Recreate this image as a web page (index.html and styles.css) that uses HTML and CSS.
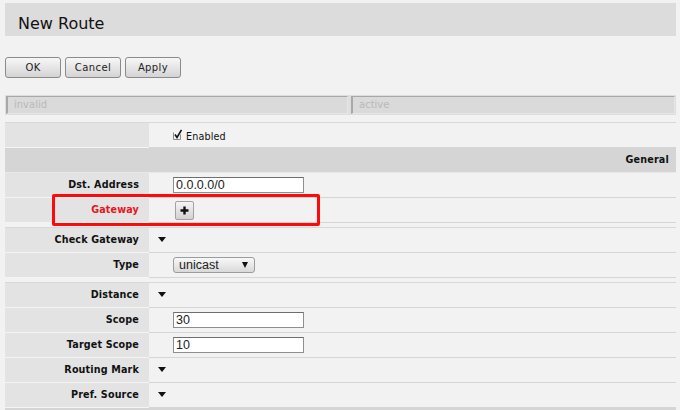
FILE: index.html
```html
<!DOCTYPE html>
<html>
<head>
<meta charset="utf-8">
<link rel="stylesheet" href="styles.css">
</head>
<body>
<div class="page">
  <div class="titlebar">New Route</div>
  <div class="buttons">
    <button class="btn btn-ok">OK</button>
    <button class="btn btn-cancel">Cancel</button>
    <button class="btn btn-apply">Apply</button>
  </div>
  <div class="status">
    <div class="field field-left">invalid</div>
    <div class="field field-right">active</div>
  </div>

  <div class="group">
    <div class="row">
      <div class="label"></div>
      <div class="value">
        <span class="check">
          <svg width="10" height="11" viewBox="0 0 10 11">
            <path d="M0.5 3.5 V10.5 H7.5 V5.5" fill="none" stroke="#8a8a8a" stroke-width="1"/>
            <path d="M2 5.5 L4 8.5 L8.5 0.8" fill="none" stroke="#111" stroke-width="1.6"/>
          </svg>
        </span>
        <span class="check-text">Enabled</span>
      </div>
    </div>
    <div class="section">General</div>
    <div class="row">
      <div class="label">Dst. Address</div>
      <div class="value"><input class="text" type="text" value="0.0.0.0/0"></div>
    </div>
    <div class="row row-gateway">
      <div class="label label-red">Gateway</div>
      <div class="value">
        <span class="plus">
          <svg width="9" height="9" viewBox="0 0 9 9"><path d="M4.5 0.5 V8.5 M0.5 4.5 H8.5" stroke="#111" stroke-width="2.4"/></svg>
        </span>
      </div>
      <div class="highlight"></div>
    </div>
  </div>

  <div class="group">
    <div class="row">
      <div class="label">Check Gateway</div>
      <div class="value value-tri"><span class="tri"></span></div>
    </div>
    <div class="row">
      <div class="label">Type</div>
      <div class="value">
        <span class="select">unicast<span class="sel-arrow"></span></span>
      </div>
    </div>
  </div>

  <div class="group">
    <div class="row">
      <div class="label">Distance</div>
      <div class="value value-tri"><span class="tri"></span></div>
    </div>
    <div class="row">
      <div class="label">Scope</div>
      <div class="value"><input class="text" type="text" value="30"></div>
    </div>
    <div class="row">
      <div class="label">Target Scope</div>
      <div class="value"><input class="text" type="text" value="10"></div>
    </div>
    <div class="row">
      <div class="label">Routing Mark</div>
      <div class="value value-tri"><span class="tri"></span></div>
    </div>
    <div class="row">
      <div class="label">Pref. Source</div>
      <div class="value value-tri"><span class="tri"></span></div>
    </div>
    <div class="section section-empty"></div>
  </div>
</div>
</body>
</html>
```

FILE: styles.css
```css
html, body {
  margin: 0;
  padding: 0;
  background: #f2f2f2;
  overflow: hidden;
}
body {
  font-family: "DejaVu Sans", Verdana, sans-serif;
  color: #111;
}
.page {
  padding: 3px 4px 0 5px;
}
.titlebar {
  height: 33px;
  background: #dcdcdc;
  box-sizing: border-box;
  padding-left: 13px;
  padding-top: 13px;
  font-size: 16px;
  line-height: 16px;
  color: #111;
}
.buttons {
  display: flex;
  gap: 4px;
  margin-top: 21px;
  height: 21px;
}
.btn {
  font-family: "DejaVu Sans", Verdana, sans-serif;
  font-size: 10px;
  color: #222;
  height: 21px;
  padding: 0;
  border: 1px solid #8a8a8a;
  border-radius: 3px;
  background: linear-gradient(#f7f7f7, #d4d4d4);
  letter-spacing: 0.4px;
}
.btn-ok { width: 56px; }
.btn-cancel { width: 56px; }
.btn-apply { width: 56px; }
.status {
  display: flex;
  gap: 3px;
  margin-top: 17px;
  height: 20px;
  background: #dedede;
  padding: 1px;
  box-sizing: border-box;
}
.field {
  box-sizing: border-box;
  height: 18px;
  background: #dadada;
  border-top: 1px solid #a8a8a8;
  border-left: 2px solid #a8a8a8;
  border-right: 1px solid #e6e6e6;
  border-bottom: 1px solid #e6e6e6;
  color: #b9b9b9;
  font-size: 10px;
  line-height: 16px;
  padding-left: 6px;
}
.field-left { width: 342px; }
.field-right { flex: 1; }

.group {
  margin-top: 7px;
  border-top: 1px solid #d8d8d8;
}
.group + .group {
  margin-top: 4px;
}
.row {
  display: flex;
  height: 25px;
  position: relative;
}
.label {
  width: 144px;
  box-sizing: border-box;
  background: #e3e3e3;
  border-bottom: 1px solid #f4f4f4;
  text-align: right;
  padding-right: 10px;
  font-size: 9.6px;
  font-weight: bold;
  line-height: 24px;
  color: #111;
  letter-spacing: 0.15px;
}
.label-red {
  color: #e8141e;
}
.value {
  flex: 1;
  box-sizing: border-box;
  border-bottom: 1px solid #d6d6d6;
  display: flex;
  align-items: center;
  padding-left: 24px;
}
.value-tri {
  padding-left: 9px;
}
.tri {
  width: 0;
  height: 0;
  border-left: 4px solid transparent;
  border-right: 4px solid transparent;
  border-top: 5px solid #111;
  margin-top: -1px;
}
.check {
  display: inline-flex;
  width: 10px;
  height: 11px;
  margin-top: -2px;
}
.check-text {
  font-size: 9.6px;
  margin-left: 3px;
  margin-top: 2px;
  letter-spacing: 0.15px;
}
.section {
  height: 25px;
  box-sizing: border-box;
  background: #d5d5d5;
  border-bottom: 1px solid #e8e8e8;
  text-align: right;
  padding-right: 7px;
  font-size: 9.6px;
  font-weight: bold;
  line-height: 24px;
  letter-spacing: 0.2px;
}
.section-empty {
  border-bottom: none;
}
.text {
  box-sizing: border-box;
  width: 131px;
  height: 16px;
  margin: 0;
  padding: 0 0 0 2px;
  border: 1px solid #8e8e8e;
  border-top-color: #6e6e6e;
  background: #fff;
  font-family: "Liberation Sans", Arial, sans-serif;
  font-size: 12.5px;
  color: #222;
  outline: none;
}
.plus {
  box-sizing: border-box;
  width: 19px;
  height: 19px;
  margin-left: 2px;
  border: 1px solid #a2a2a2;
  border-radius: 2px;
  background: linear-gradient(#f4f4f4, #d2d2d2);
  display: flex;
  align-items: center;
  justify-content: center;
}
.plus svg { display: block; }
.select {
  box-sizing: border-box;
  width: 82px;
  height: 16px;
  border: 1px solid #9c9c9c;
  border-radius: 3px;
  background: linear-gradient(#f8f8f8, #d9d9d9);
  font-family: "Liberation Sans", Arial, sans-serif;
  font-size: 12.5px;
  line-height: 14px;
  padding-left: 5px;
  color: #222;
  position: relative;
}
.sel-arrow {
  position: absolute;
  right: 6px;
  top: 4px;
  width: 0;
  height: 0;
  border-left: 3.5px solid transparent;
  border-right: 3.5px solid transparent;
  border-top: 6px solid #111;
}
.highlight {
  position: absolute;
  left: 47px;
  top: -4px;
  width: 268px;
  height: 32px;
  box-sizing: border-box;
  border: 3px solid #ff0a0a;
  border-radius: 2px;
  pointer-events: none;
}
```
